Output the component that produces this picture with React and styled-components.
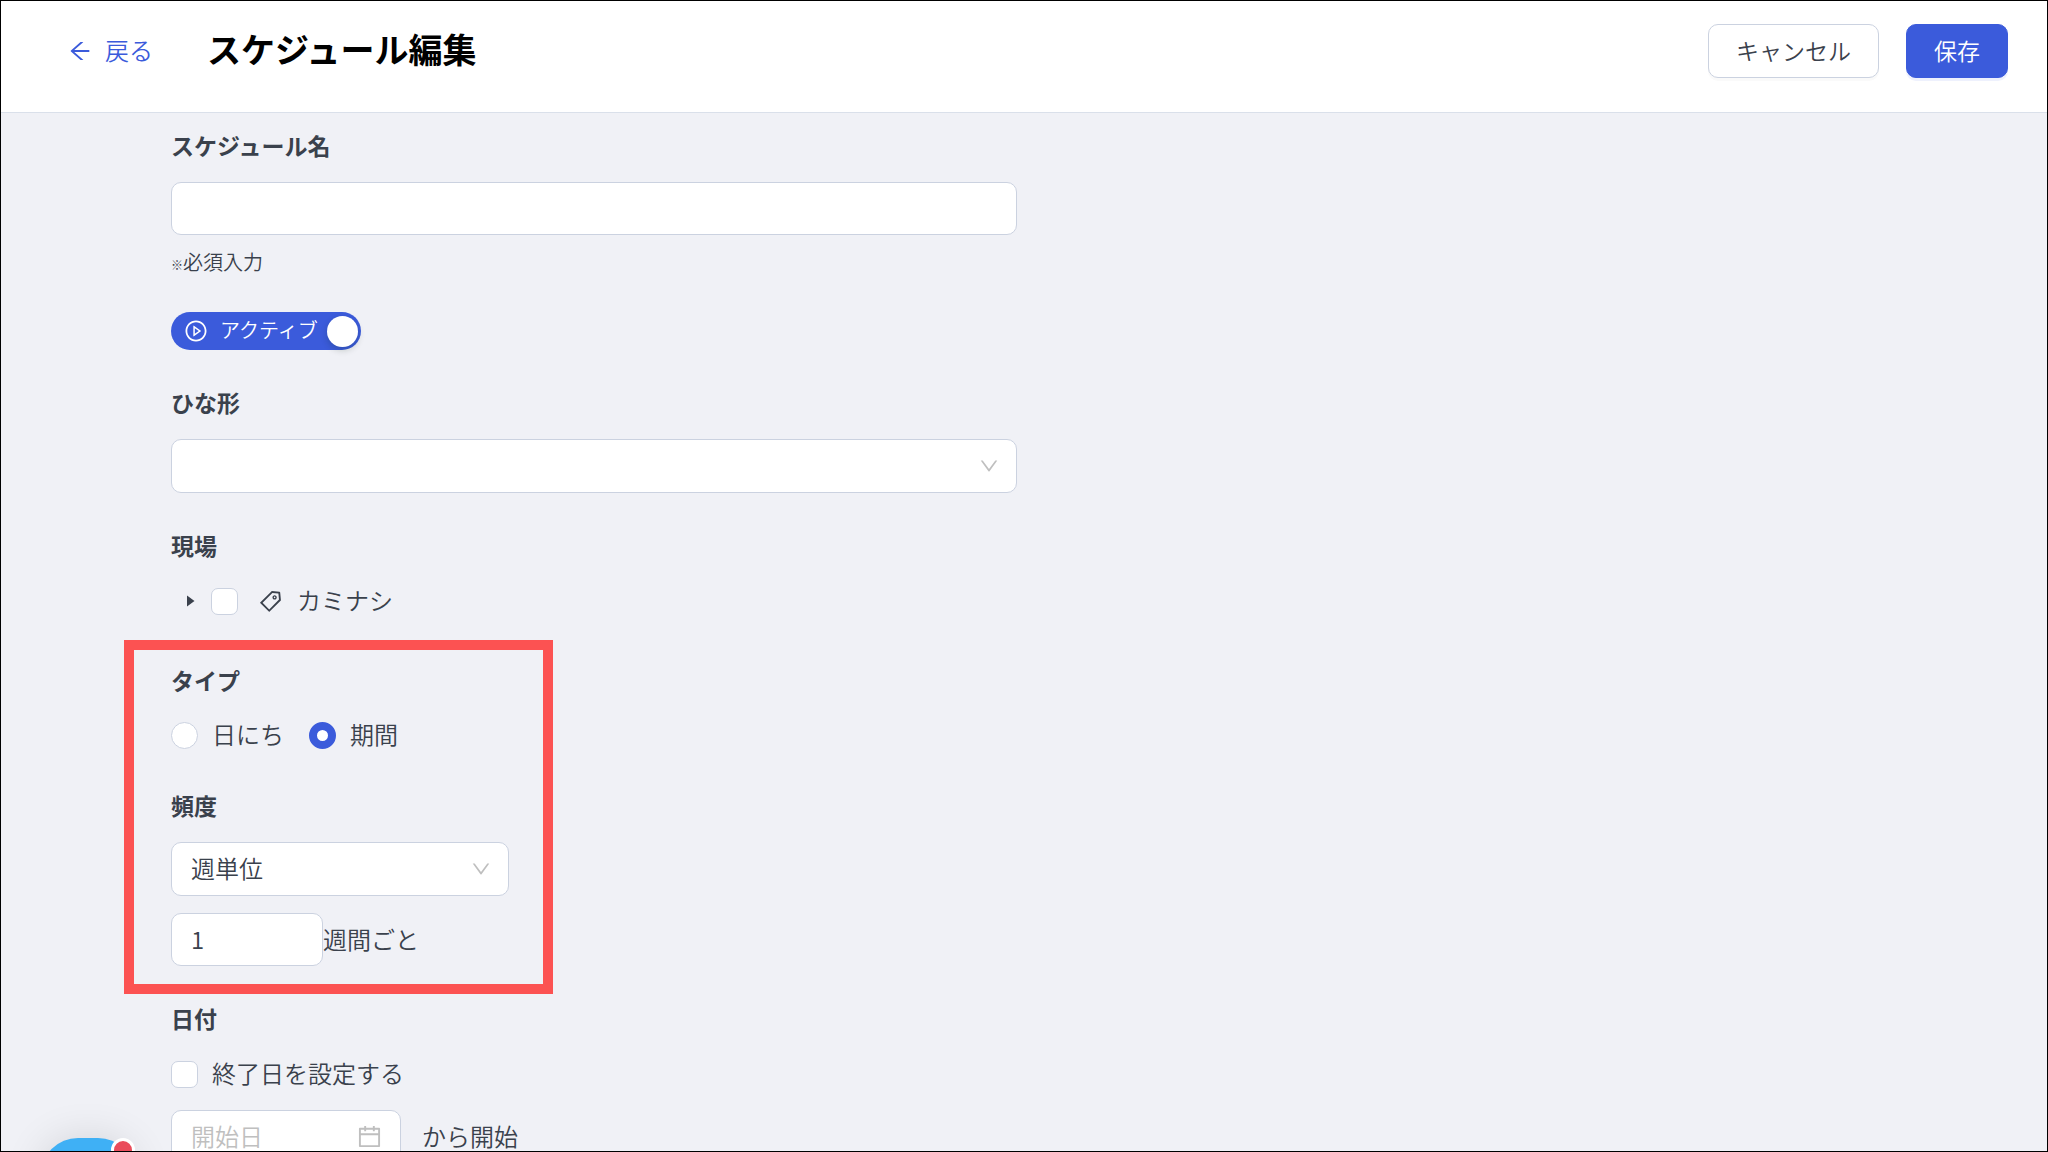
import React from 'react';
import styled, { createGlobalStyle } from 'styled-components';
import {
  AiOutlineArrowLeft,
  AiOutlineCalendar,
  AiOutlineDown,
  AiOutlinePlayCircle,
  AiOutlineTag,
} from 'react-icons/ai';

const GlobalStyle = createGlobalStyle`
  *, *::before, *::after {
    box-sizing: border-box;
  }

  body {
    margin: 0;
    color: #3a414c;
    font-family: 'Noto Sans CJK JP', sans-serif;
    font-size: 24px;
    font-weight: 350;
    line-height: 36px;
  }

  button, input, select {
    margin: 0;
    color: inherit;
    font: inherit;
  }
`;

const Page = styled.div`
  position: relative;
  display: flex;
  flex-direction: column;
  height: 100vh;
  overflow: hidden;
  border: 1px solid #000;
  background: #f0f1f6;
`;

const Header = styled.header`
  flex: none;
  display: flex;
  align-items: flex-start;
  padding: 23px 39px 34px 66px;
  border-bottom: 1px solid #dae0ea;
  background: #fff;
`;

const BackLink = styled.a`
  display: flex;
  align-items: center;
  gap: 12px;
  height: 54px;
  color: #3b5bdb;
  text-decoration: none;
`;

const Title = styled.h1`
  flex: 1;
  margin: 0 0 0 54px;
  color: #000;
  font-size: 34px;
  font-weight: 700;
  line-height: 50px;
`;

const Actions = styled.div`
  display: flex;
  gap: 27px;
`;

const Button = styled.button`
  height: 54px;
  padding: 0 27px 2px;
  border: 1px solid ${({ $primary }) => ($primary ? '#3b5bdb' : '#cbd2e0')};
  border-radius: 10px;
  background: ${({ $primary }) => ($primary ? '#3b5bdb' : '#fff')};
  box-shadow: 0 3px 0 ${({ $primary }) => ($primary ? '#eef1fd' : '#fafafa')};
  color: ${({ $primary }) => ($primary ? '#fff' : 'inherit')};
  font-size: 23px;
`;

const Form = styled.form`
  flex: 1;
  display: flex;
  flex-direction: column;
  align-items: flex-start;
  gap: 34px;
  min-height: 0;
  padding: 14px 170px 0;
  overflow: hidden;

  & > * {
    flex: none;
  }
`;

const Field = styled.div`
  display: flex;
  flex-direction: column;
  align-items: flex-start;
  gap: 19px;
  width: 100%;
  max-width: 846px;
`;

const FieldSet = styled.fieldset`
  width: 100%;
  min-width: 0;
  margin: 0;
  padding: 0 0 ${({ $bottom }) => $bottom || 0}px;
  border: 0;
`;

const Label = styled.label`
  font-size: 23px;
  font-weight: 700;
`;

const Legend = styled.legend`
  margin-bottom: 19px;
  padding: 0;
  font-size: 23px;
  font-weight: 700;
`;

const Stack = styled.div`
  display: flex;
  flex-direction: column;
  align-items: flex-start;
  gap: ${({ $gap }) => $gap}px;
  width: 100%;
`;

const TextInput = styled.input`
  display: block;
  width: ${({ $width }) => $width || '100%'};
  height: 53px;
  padding: 0 19px 2px;
  border: 1px solid #cbd2e0;
  border-radius: 10px;
  background: #fff;
  outline: none;

  &::placeholder {
    color: #bfbfbf;
    opacity: 1;
  }
`;

const Help = styled.p`
  margin: 0;
  font-size: 20px;
  line-height: 33px;
`;

const HelpMark = styled.span`
  font-size: 12px;
  font-weight: 700;
  line-height: 1;
`;

const SelectBox = styled.div`
  position: relative;
  width: 100%;

  svg {
    position: absolute;
    top: 16px;
    right: 17px;
    color: #bfbfbf;
    pointer-events: none;
  }
`;

const Select = styled.select`
  display: block;
  width: 100%;
  height: 54px;
  padding: 0 19px 2px;
  border: 1px solid #cbd2e0;
  border-radius: 10px;
  background: #fff;
  appearance: none;
  outline: none;
`;

const Switch = styled.button`
  display: flex;
  align-items: center;
  gap: 12px;
  height: 38px;
  padding: 0 3px 0 13px;
  border: 0;
  border-radius: 19px;
  background: #3b5bdb;
  color: #fff;
  font-size: 20px;
`;

const SwitchText = styled.span`
  padding-bottom: 2px;
`;

const Knob = styled.span`
  width: 31px;
  height: 31px;
  margin-left: -3px;
  border-radius: 50%;
  background: #fff;
  box-shadow: 0 3px 7px rgba(0, 35, 11, 0.2);
`;

const TreeRow = styled.div`
  display: flex;
  align-items: center;
  height: 38px;
  padding-left: 16px;
`;

const Expander = styled.button`
  display: flex;
  margin-right: 16px;
  padding: 0;
  border: 0;
  background: none;
`;

const CheckLabel = styled.label`
  display: flex;
  align-items: center;
  gap: 14px;

  svg {
    margin-left: 6px;
  }
`;

const CheckText = styled.span`
  padding-bottom: 2px;
`;

const Check = styled.input`
  width: 27px;
  height: 27px;
  border: 1px solid #cbd2e0;
  border-radius: 7px;
  background: #fff;
  appearance: none;
`;

const Radio = styled.input`
  width: 27px;
  height: 27px;
  border: 1px solid #cbd2e0;
  border-radius: 50%;
  background: #fff;
  appearance: none;

  &:checked {
    border: 8px solid #3b5bdb;
  }
`;

const RadioRow = styled.div`
  display: flex;
  gap: 25px;
  height: 36px;
`;

const Highlight = styled.div`
  position: relative;
  display: flex;
  flex-direction: column;
  gap: 34px;
  width: 338px;

  &::after {
    content: '';
    position: absolute;
    inset: -22px -44px -28px -47px;
    border: 10px solid #fc5252;
    pointer-events: none;
  }
`;

const InlineRow = styled.div`
  display: flex;
  align-items: center;
  gap: ${({ $gap }) => $gap || 0}px;
`;

const InlineLabel = styled.label`
  padding-bottom: 2px;
`;

const DateBox = styled.div`
  position: relative;
  width: 230px;

  svg {
    position: absolute;
    top: 13px;
    right: 18px;
    color: #bfbfbf;
  }
`;

const ChatButton = styled.button`
  position: absolute;
  bottom: -81px;
  left: 40px;
  width: 94px;
  height: 94px;
  padding: 0;
  border: 0;
  border-radius: 37px;
  background: #3fb0f5;
  box-shadow: 0 0 40px rgba(0, 0, 0, 0.12);
`;

const ChatBadge = styled.span`
  position: absolute;
  top: 0;
  right: 0;
  width: 24px;
  height: 24px;
  border: 3px solid #fff;
  border-radius: 50%;
  background: #ea4c5b;
`;

const App = () => (
  <>
    <GlobalStyle />
    <Page>
      <Header>
        <BackLink href="#back">
          <AiOutlineArrowLeft size={26} />
          <CheckText>戻る</CheckText>
        </BackLink>
        <Title>スケジュール編集</Title>
        <Actions>
          <Button type="button">キャンセル</Button>
          <Button type="submit" form="schedule" $primary>保存</Button>
        </Actions>
      </Header>
      <Form id="schedule">
        <Field>
          <Label htmlFor="name">スケジュール名</Label>
          <Stack $gap={10}>
            <TextInput id="name" type="text" />
            <Help><HelpMark>※</HelpMark>必須入力</Help>
          </Stack>
        </Field>
        <Switch type="button" role="switch" aria-checked="true">
          <AiOutlinePlayCircle size={24} />
          <SwitchText>アクティブ</SwitchText>
          <Knob />
        </Switch>
        <Field>
          <Label htmlFor="template">ひな形</Label>
          <SelectBox>
            <Select id="template" />
            <AiOutlineDown size={22} />
          </SelectBox>
        </Field>
        <FieldSet $bottom={8}>
          <Legend>現場</Legend>
          <TreeRow>
            <Expander type="button" aria-label="カミナシ">
              <svg width="8" height="12" viewBox="0 0 8 12">
                <path d="M0 0.5L7.5 6L0 11.5Z" fill="#3a414c" />
              </svg>
            </Expander>
            <CheckLabel>
              <Check type="checkbox" />
              <AiOutlineTag size={25} />
              <CheckText>カミナシ</CheckText>
            </CheckLabel>
          </TreeRow>
        </FieldSet>
        <Highlight>
          <FieldSet>
            <Legend>タイプ</Legend>
            <RadioRow>
              <CheckLabel>
                <Radio type="radio" name="type" />
                <CheckText>日にち</CheckText>
              </CheckLabel>
              <CheckLabel>
                <Radio type="radio" name="type" defaultChecked />
                <CheckText>期間</CheckText>
              </CheckLabel>
            </RadioRow>
          </FieldSet>
          <Field>
            <Label htmlFor="frequency">頻度</Label>
            <Stack $gap={17}>
              <SelectBox>
                <Select id="frequency" defaultValue="week">
                  <option value="week">週単位</option>
                </Select>
                <AiOutlineDown size={22} />
              </SelectBox>
              <InlineRow>
                <TextInput id="interval" type="text" defaultValue="1" $width="152px" />
                <InlineLabel htmlFor="interval">週間ごと</InlineLabel>
              </InlineRow>
            </Stack>
          </Field>
        </Highlight>
        <Field>
          <Label as="div">日付</Label>
          <Stack $gap={17}>
            <CheckLabel>
              <Check type="checkbox" />
              <CheckText>終了日を設定する</CheckText>
            </CheckLabel>
            <InlineRow $gap={21}>
              <DateBox>
                <TextInput id="start" type="text" placeholder="開始日" />
                <AiOutlineCalendar size={27} />
              </DateBox>
              <InlineLabel htmlFor="start">から開始</InlineLabel>
            </InlineRow>
          </Stack>
        </Field>
      </Form>
      <ChatButton type="button" aria-label="チャット">
        <ChatBadge />
      </ChatButton>
    </Page>
  </>
);

export default App;
